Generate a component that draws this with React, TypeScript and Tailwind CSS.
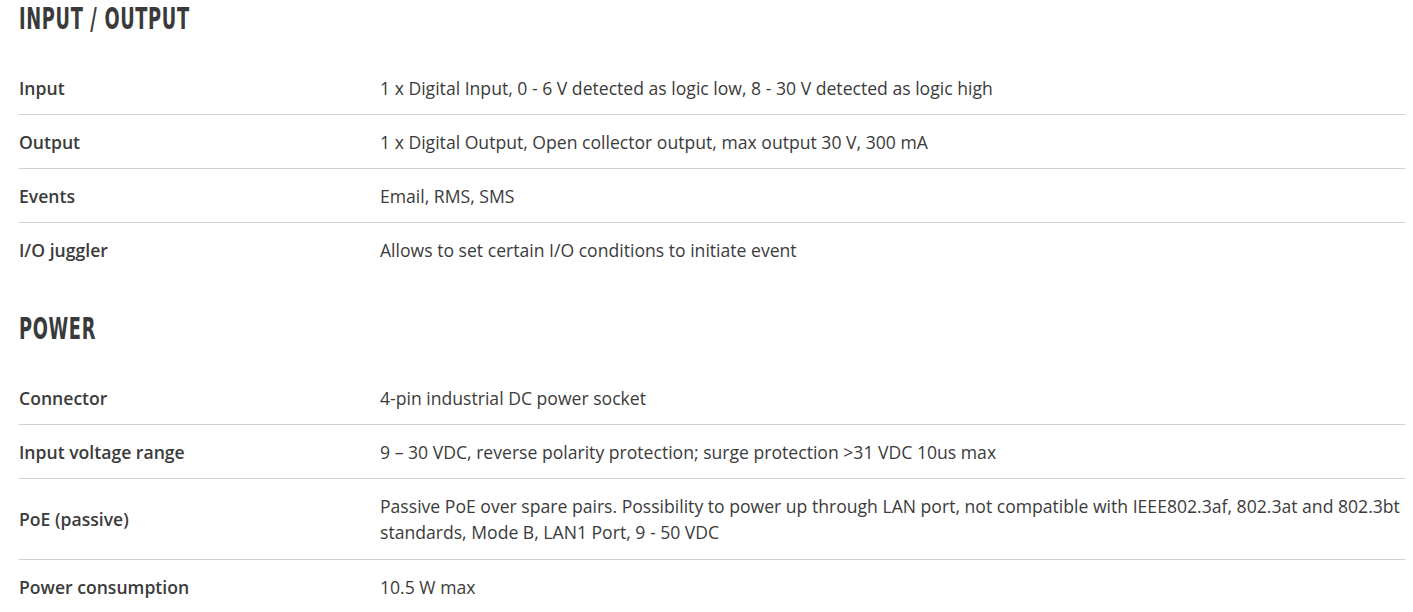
import React from "react";

type Row = { label: string; value: React.ReactNode; tall?: boolean };

const io: Row[] = [
  { label: "Input", value: "1 x Digital Input, 0 - 6 V detected as logic low, 8 - 30 V detected as logic high" },
  { label: "Output", value: "1 x Digital Output, Open collector output, max output 30 V, 300 mA" },
  { label: "Events", value: "Email, RMS, SMS" },
  { label: "I/O juggler", value: "Allows to set certain I/O conditions to initiate event" },
];

const power: Row[] = [
  { label: "Connector", value: "4-pin industrial DC power socket" },
  { label: "Input voltage range", value: "9 – 30 VDC, reverse polarity protection; surge protection >31 VDC 10us max" },
  {
    label: "PoE (passive)",
    value:
      "Passive PoE over spare pairs. Possibility to power up through LAN port, not compatible with IEEE802.3af, 802.3at and 802.3bt standards, Mode B, LAN1 Port, 9 - 50 VDC",
    tall: true,
  },
  { label: "Power consumption", value: "10.5 W max" },
];

function Heading({ children }: { children: React.ReactNode }) {
  return (
    <div className="h-[61px] pt-[1px]">
      <h2
        className="inline-block origin-left scale-x-[0.66] text-[30px] font-bold leading-[36px] tracking-[1px] text-[#3a3a3a]"
        style={{ fontFamily: '"DejaVu Sans Condensed", "DejaVu Sans", sans-serif', fontStretch: "condensed" }}
      >
        {children}
      </h2>
    </div>
  );
}

function Table({ rows }: { rows: Row[] }) {
  return (
    <div>
      {rows.map((r, i) => (
        <div
          key={r.label}
          className={`flex items-center ${i < rows.length - 1 ? "border-b border-[#d2d2d2]" : ""} ${
            r.tall ? "py-[14px]" : "pt-[14px] pb-[13px]"
          }`}
        >
          <div className="w-[361px] shrink-0 font-semibold text-[#3b3b3b]">{r.label}</div>
          <div className="flex-1 text-[#3b3b3b]">{r.value}</div>
        </div>
      ))}
    </div>
  );
}

export default function App() {
  return (
    <div
      className="min-h-[612px] bg-white pl-[19px] pr-[8px] text-[17.6px] leading-[26px]"
      style={{ fontFamily: '"Open Sans", "Liberation Sans", sans-serif' }}
    >
      <Heading>INPUT / OUTPUT</Heading>
      <Table rows={io} />
      <div className="h-[34px]" />
      <Heading>POWER</Heading>
      <Table rows={power} />
    </div>
  );
}
